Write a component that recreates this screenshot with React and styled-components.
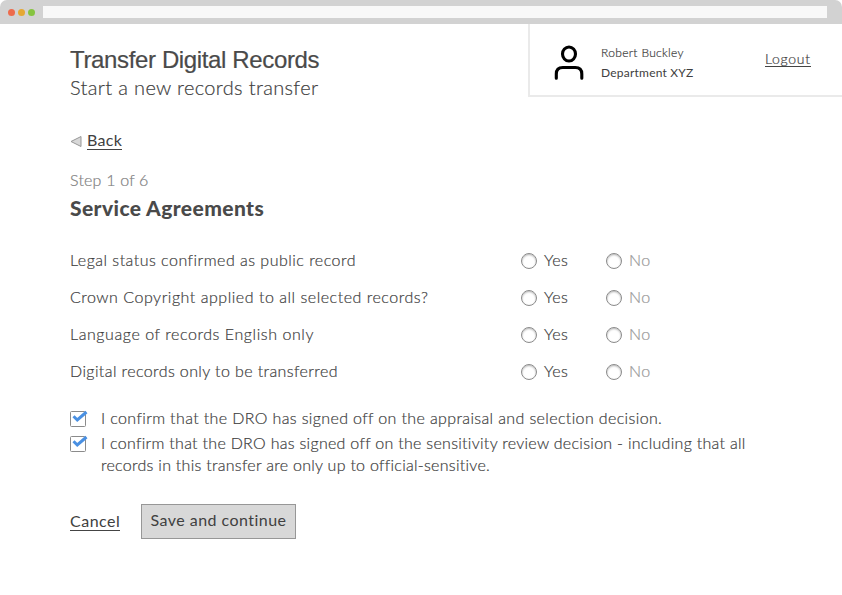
import React from "react";
import styled, { createGlobalStyle } from "styled-components";

const GlobalStyle = createGlobalStyle`
  *, *::before, *::after { box-sizing: border-box; }
  body {
    margin: 0;
    background: #fff;
    color: #404040;
    font: 300 16px/22px Lato, "Open Sans", sans-serif;
    -webkit-text-stroke: 0.2px;
    white-space: nowrap;
  }
  h1, h2, p { margin: 0; }
`;

const Window = styled.div`
  width: 842px;
  height: 595px;
  overflow: hidden;
  background: #fff;
`;

const TitleBar = styled.div`
  display: flex;
  align-items: center;
  height: 24px;
  padding: 1px 15px 0 8px;
  background: #d2d2d2;
  border-radius: 7px 7px 0 0;
`;

const Light = styled.span`
  width: 7px;
  height: 7px;
  margin-right: 3px;
  border-radius: 50%;
  background: ${(p) => p.$color};
`;

const AddressBar = styled.div`
  flex: 1;
  height: 12px;
  margin: 0 0 1px 5px;
  background: #f8f8f8;
`;

const Header = styled.header`
  display: flex;
  justify-content: space-between;
  height: 105px;
  padding-left: 70px;
`;

const Titles = styled.div`
  padding-top: 22px;
`;

const Title = styled.h1`
  color: #4a4a4a;
  font: 400 24px/28px "Liberation Sans", Arial, sans-serif;
  letter-spacing: -0.36px;
`;

const Subtitle = styled.p`
  font-size: 20px;
  line-height: 27px;
  letter-spacing: 0.35px;
`;

const UserPanel = styled.div`
  display: flex;
  width: 314px;
  height: 73px;
  border: solid #eaeaea;
  border-width: 0 0 2px 2px;
`;

const PersonIcon = styled.svg`
  width: 30px;
  height: 36px;
  margin: 21px 0 0 24px;
  fill: none;
  stroke: #000;
  stroke-width: 3.1;
  stroke-linecap: round;
`;

const UserDetails = styled.div`
  width: 181px;
  padding: 19px 0 0 17px;
  font-size: 12px;
  line-height: 20px;
`;

const UserName = styled.p`
  letter-spacing: 0.33px;
`;

const Department = styled.p`
  font-weight: 400;
  letter-spacing: 0.22px;
  -webkit-text-stroke: 0;
`;

const Link = styled.a`
  align-self: flex-start;
  font-size: ${(p) => p.$size || 16}px;
  font-weight: ${(p) => p.$weight || 300};
  line-height: 18px;
  letter-spacing: ${(p) => p.$spacing || 0}px;
  border-bottom: 1px solid #444;
  -webkit-text-stroke: ${(p) => (p.$weight ? 0 : "0.2px")};
  cursor: pointer;
`;

const Logout = styled(Link)`
  height: 17px;
  margin-top: 26px;
`;

const Main = styled.main`
  padding: 0 70px;
`;

const BackRow = styled.nav`
  display: flex;
  height: 40px;
  padding-top: 2px;
`;

const Triangle = styled.svg`
  width: 12px;
  height: 12px;
  margin: 4px 5px 0 0;
  fill: #d8d8d8;
  stroke: #979797;
`;

const Step = styled.p`
  color: #808080;
  line-height: 21px;
  letter-spacing: 0.2px;
`;

const Heading = styled.h2`
  margin-top: 1px;
  color: #4a4a4a;
  font-size: 21px;
  font-weight: 900;
  line-height: 34px;
  letter-spacing: 0.4px;
  -webkit-text-stroke: 0;
`;

const Questions = styled.div`
  margin-top: 16px;
`;

const QuestionRow = styled.div`
  display: grid;
  grid-template-columns: 451px 85px 85px;
  align-items: center;
  height: 37px;
`;

const QuestionText = styled.span`
  letter-spacing: ${(p) => p.$spacing}px;
`;

const Choice = styled.label`
  display: flex;
  align-items: center;
  gap: 7px;
  color: ${(p) => (p.$muted ? "#999" : "inherit")};
  letter-spacing: 0.4px;
`;

const Radio = styled.span`
  width: 16px;
  height: 16px;
  margin-top: 2px;
  border: 1px solid #8b8b8b;
  border-radius: 50%;
  background: #fff;
  box-shadow: inset 0 1px 2px rgba(0, 0, 0, 0.3);
`;

const Confirmations = styled.div`
  margin-top: 18px;
`;

const Confirmation = styled.label`
  display: flex;
  gap: 13px;
  margin-bottom: 3px;
`;

const Checkbox = styled.svg`
  width: 18px;
  height: 18px;
  margin-top: 3px;
`;

const Line = styled.span`
  display: block;
  width: max-content;
  letter-spacing: ${(p) => p.$spacing}px;
`;

const Actions = styled.div`
  display: flex;
  gap: 21px;
  margin-top: 28px;
`;

const Cancel = styled(Link)`
  width: 50px;
  margin-top: 8px;
`;

const SaveButton = styled.button`
  width: 155px;
  height: 35px;
  padding: 0 0 3px;
  border: 1px solid #979797;
  background: #d8d8d8;
  color: #404040;
  font: 400 16px/20px Lato, sans-serif;
  letter-spacing: 0.46px;
  -webkit-text-stroke: 0;
`;

const questions = [
  ["Legal status confirmed as public record", 0.485],
  ["Crown Copyright applied to all selected records?", 0.525],
  ["Language of records English only", 0.57],
  ["Digital records only to be transferred", 0.4],
];

const confirmations = [
  [["I confirm that the DRO has signed off on the appraisal and selection decision.", 0.37]],
  [
    ["I confirm that the DRO has signed off on the sensitivity review decision - including that all", 0.29],
    ["records in this transfer are only up to official-sensitive.", 0.28],
  ],
];

function CheckIcon() {
  return (
    <Checkbox viewBox="0 0 18 18">
      <rect x="0.5" y="1.5" width="15" height="15" rx="1" fill="#fff" stroke="#8b8b8b" />
      <path d="M3.5 6.2 7.3 10 16.5 2" fill="none" stroke="#4a90e2" strokeWidth="3" />
    </Checkbox>
  );
}

export default function App() {
  return (
    <>
      <GlobalStyle />
      <Window>
        <TitleBar>
          <Light $color="#ed6b4c" />
          <Light $color="#e5a834" />
          <Light $color="#86c440" />
          <AddressBar />
        </TitleBar>
        <Header>
          <Titles>
            <Title>Transfer Digital Records</Title>
            <Subtitle>Start a new records transfer</Subtitle>
          </Titles>
          <UserPanel>
            <PersonIcon viewBox="0 0 30 36">
              <ellipse cx="15" cy="9" rx="6.5" ry="7" />
              <path d="M2.3 33.2V29Q2.3 22.5 8.8 22.5H21.3Q27.8 22.5 27.8 29V33.2" />
            </PersonIcon>
            <UserDetails>
              <UserName>Robert Buckley</UserName>
              <Department>Department XYZ</Department>
            </UserDetails>
            <Logout $size={14} $spacing={0.7}>Logout</Logout>
          </UserPanel>
        </Header>
        <Main>
          <BackRow>
            <Triangle viewBox="0 0 12 12">
              <path d="M1 6.5 11 1.5V11.5Z" />
            </Triangle>
            <Link $weight={400} $spacing={0.3}>Back</Link>
          </BackRow>
          <Step>Step 1 of 6</Step>
          <Heading>Service Agreements</Heading>
          <Questions>
            {questions.map(([text, spacing]) => (
              <QuestionRow key={text}>
                <QuestionText $spacing={spacing}>{text}</QuestionText>
                <Choice><Radio /><span>Yes</span></Choice>
                <Choice $muted><Radio /><span>No</span></Choice>
              </QuestionRow>
            ))}
          </Questions>
          <Confirmations>
            {confirmations.map((lines, i) => (
              <Confirmation key={i}>
                <CheckIcon />
                <div>
                  {lines.map(([text, spacing]) => (
                    <Line key={text} $spacing={spacing}>{text}</Line>
                  ))}
                </div>
              </Confirmation>
            ))}
          </Confirmations>
          <Actions>
            <Cancel $weight={400} $spacing={0.5}>Cancel</Cancel>
            <SaveButton>Save and continue</SaveButton>
          </Actions>
        </Main>
      </Window>
    </>
  );
}
